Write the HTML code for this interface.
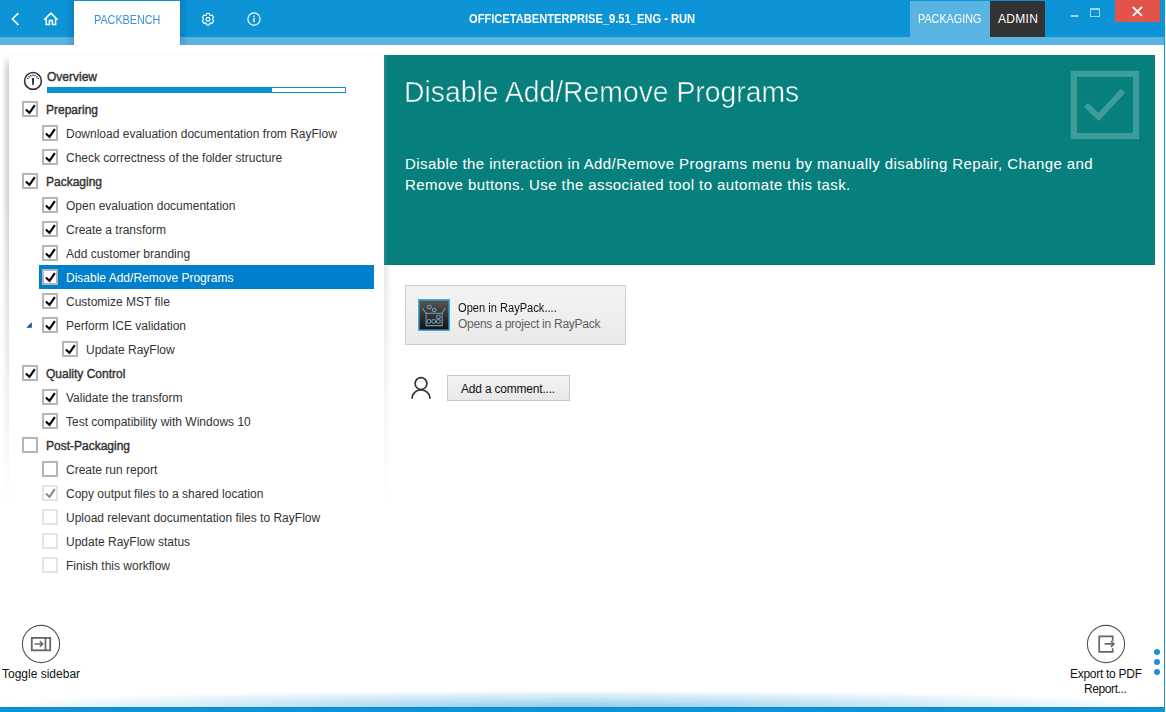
<!DOCTYPE html>
<html><head><meta charset="utf-8">
<style>
*{margin:0;padding:0;box-sizing:border-box}
html,body{width:1166px;height:712px;overflow:hidden;background:#fff;font-family:"Liberation Sans",sans-serif;position:relative}
.a{position:absolute}
svg{display:block}
#hdr{left:0;top:0;width:1164px;height:37px;background:#0c94d7}
#stripe{left:0;top:37px;width:1164px;height:8px;background:#5ab4e2}
#rborder{left:1164px;top:0;width:1px;height:712px;background:#0c94d7}
#tab{left:74px;top:1px;width:106px;height:44px;background:#fff}
#tshl{left:65px;top:0;width:9px;height:45px;background:linear-gradient(to right,rgba(0,40,80,0),rgba(0,40,80,.17))}
#tshr{left:180px;top:0;width:9px;height:45px;background:linear-gradient(to left,rgba(0,40,80,0),rgba(0,40,80,.17))}
#tabtxt{left:94px;top:12px;font-size:12px;line-height:16px;color:#3d8fd6;white-space:nowrap;transform:scaleX(0.9);transform-origin:0 0}
.ht{color:#fff;font-size:12px;line-height:16px;white-space:nowrap}
#title{left:469px;top:11px;font-weight:bold;transform:scaleX(0.927);transform-origin:0 0}
#pkg{left:910px;top:1px;width:80px;height:36px;background:#5ab4e2}
#pkgt{left:918px;top:11px;transform:scaleX(0.9);transform-origin:0 0}
#adm{left:990px;top:1px;width:55px;height:36px;background:#333}
#admt{left:998px;top:11px;letter-spacing:0.3px}
#close{left:1115px;top:0;width:45px;height:22px;background:#e2534b}
#bottom{left:0;top:707px;width:1164px;height:5px;background:#0c94d7;border-top:1px solid #0689cf}
#botgrad{left:0;top:690px;width:1164px;height:17px;background:radial-gradient(ellipse 600px 17px at 575px 17px,rgba(144,205,236,1),rgba(144,205,236,0))}
/* sidebar */
#cardsh{left:1px;top:55px;width:8px;height:450px;background:linear-gradient(to right,rgba(0,0,0,0) 10%,rgba(0,0,0,.2));-webkit-mask-image:linear-gradient(transparent 0,#000 14px,#000 30%,transparent 100%)}
#cardtop{left:9px;top:52px;width:375px;height:3px;background:linear-gradient(rgba(0,0,0,0),rgba(0,0,0,.025))}
#cardr{left:384px;top:266px;width:8px;height:240px;background:linear-gradient(to right,rgba(0,0,0,.09),rgba(0,0,0,0));-webkit-mask-image:linear-gradient(#000 0,transparent 100%)}
.sel{left:39px;width:335px;height:24px;background:#0080cc}
.cb{width:16px;height:16px;border:2px solid #b5b5b5;background:#fff}
.cb .ck{position:absolute;left:-2px;top:-2px}
.cb.light{border-color:#e4e4e4}
.t{font-size:12px;line-height:18px;color:#333;white-space:nowrap}
.t.b{font-size:12px;-webkit-text-stroke:0.4px #333}
.t.w{color:#fff}
#ovt{left:47px;top:68px}
#prog{left:47px;top:87px;width:299px;height:6px;border:1px solid #0c90d5;background:#fff}
#progf{left:47px;top:87px;width:225px;height:6px;background:#0c90d5}
/* main */
#teal{left:384px;top:55px;width:771px;height:210px;background:linear-gradient(to right,#2a8b88 0,#07807d 4px,#07807d 100%);border-bottom:1px solid #077876}
#h1{left:404px;top:72px;font-size:29px;line-height:40px;color:#fff;white-space:nowrap;transform:scaleX(0.977);transform-origin:0 0;-webkit-text-stroke:0.5px #07807d}
#desc{left:405px;top:153px;font-size:15px;line-height:21px;color:#fff;white-space:nowrap;letter-spacing:0.41px}
#rp{left:405px;top:285px;width:221px;height:60px;background:linear-gradient(#f3f3f3,#eaeaea);border:1px solid #cdcdcd}
#cm{left:447px;top:375px;width:123px;height:26px;background:linear-gradient(#f3f3f3,#e8e8e8);border:1px solid #c8c8c8}
.lbl{font-size:12px;line-height:17px;color:#111;white-space:nowrap}
#rpt1{left:458px;top:300px;transform:scaleX(0.925);transform-origin:0 0}
#rpt2{left:458px;top:316px;color:#606060;letter-spacing:-0.25px}
#cmt{left:461px;top:381px;letter-spacing:-0.2px}
#tgt{left:2px;top:666px}
#ext1{left:1070px;top:666px;letter-spacing:-0.28px}
#ext2{left:1084px;top:681px;letter-spacing:-0.4px}
.dot{width:6px;height:6px;border-radius:50%;background:#1a8fd6;left:1154px}
</style></head><body>
<div class="a" id="hdr"></div>
<div class="a" id="stripe"></div>
<div class="a" id="rborder"></div>
<div class="a" id="tshl"></div>
<div class="a" id="tshr"></div>
<div class="a" id="tab"></div>
<div class="a" id="tabtxt">PACKBENCH</div>
<!-- back arrow -->
<svg class="a" style="left:0;top:0" width="300" height="37" viewBox="0 0 300 37">
 <polyline points="18.4,13.2 12.4,19 18.4,24.8" fill="none" stroke="#fff" stroke-width="1.6"/>
 <polyline points="44.2,19.8 50.9,13.1 57.6,19.8" fill="none" stroke="#fff" stroke-width="1.6"/>
 <polyline points="46.2,18.2 46.2,24.6 49.4,24.6 49.4,20.6 52.4,20.6 52.4,24.6 55.6,24.6 55.6,18.2" fill="none" stroke="#fff" stroke-width="1.5"/>
 <g transform="translate(208,19.2)" fill="none" stroke="#fff" stroke-width="1.15" stroke-linejoin="round">
  <path d="M-1.97,-4.04 L-1.33,-5.75 L1.33,-5.75 L1.97,-4.04 L2.52,-3.73 L4.31,-4.02 L5.64,-1.72 L4.49,-0.31 L4.49,0.31 L5.64,1.72 L4.31,4.02 L2.52,3.73 L1.97,4.04 L1.33,5.75 L-1.33,5.75 L-1.97,4.04 L-2.52,3.73 L-4.31,4.02 L-5.64,1.72 L-4.49,0.31 L-4.49,-0.31 L-5.64,-1.72 L-4.31,-4.02 L-2.52,-3.73 Z"/>
  <circle cx="0" cy="0" r="1.9"/>
 </g>
 <circle cx="254" cy="19" r="6.1" fill="none" stroke="#fff" stroke-width="1.15"/>
 <rect x="253.3" y="15.6" width="1.4" height="1.4" fill="#fff"/>
 <rect x="253.3" y="18" width="1.4" height="4.2" fill="#fff"/>
</svg>
<div class="a ht" id="title">OFFICETABENTERPRISE_9.51_ENG - RUN</div>
<div class="a" id="pkg"></div>
<div class="a ht" id="pkgt">PACKAGING</div>
<div class="a" id="adm"></div>
<div class="a ht" id="admt">ADMIN</div>
<div class="a" id="close"></div>
<svg class="a" style="left:1060px;top:0" width="104" height="24" viewBox="0 0 104 24">
 <rect x="10.8" y="15" width="7.5" height="2" fill="#9fd3ef"/>
 <rect x="30.5" y="8.5" width="9" height="8" fill="none" stroke="#9fd3ef" stroke-width="1"/>
 <rect x="30" y="8" width="10" height="2" fill="#9fd3ef"/>
 <path d="M72.8,7 L82,15.8 M82,7 L72.8,15.8" stroke="#fff" stroke-width="1.8"/>
</svg>
<div class="a" id="botgrad"></div>
<div class="a" id="bottom"></div>

<!-- sidebar -->
<div class="a" id="cardsh"></div>
<div class="a" id="cardtop"></div>
<div class="a" id="cardr"></div>
<svg class="a" style="left:22px;top:70px" width="22" height="22" viewBox="0 0 22 22">
 <circle cx="11" cy="10.9" r="8.4" fill="none" stroke="#333" stroke-width="1.6"/>
 <path d="M9.9,8.0 L12.1,8.0 L11.8,14.9 L10.2,14.9 Z" fill="#333"/>
 <g stroke="#333" stroke-width="1.2"><path d="M6.56,8.83 L5.20,8.20"/><path d="M7.64,7.34 L6.61,6.24"/><path d="M9.19,6.35 L8.64,4.95"/><path d="M11.00,6.00 L11.00,4.50"/><path d="M12.81,6.35 L13.36,4.95"/><path d="M14.36,7.34 L15.39,6.24"/><path d="M15.44,8.83 L16.80,8.20"/></g>
</svg>
<div class="a t b" id="ovt">Overview</div>
<div class="a" id="prog"></div>
<div class="a" id="progf"></div>
<svg class="a" style="left:26px;top:322px" width="6" height="6" viewBox="0 0 6 6"><path d="M5.8,0.2 L5.8,5.8 L0.2,5.8 Z" fill="#1e4f9e"/></svg>
<div class="a cb" style="left:22px;top:101px"><svg class="ck" width="16" height="16" viewBox="0 0 16 16"><polyline points="3.9,8.4 7.5,11.9 12.8,4.2" fill="none" stroke="#000" stroke-width="2.1" stroke-linecap="butt" stroke-linejoin="miter"/></svg></div>
<div class="a t b" style="left:46px;top:101px">Preparing</div>
<div class="a cb" style="left:42px;top:125px"><svg class="ck" width="16" height="16" viewBox="0 0 16 16"><polyline points="3.9,8.4 7.5,11.9 12.8,4.2" fill="none" stroke="#000" stroke-width="2.1" stroke-linecap="butt" stroke-linejoin="miter"/></svg></div>
<div class="a t" style="left:66px;top:125px">Download evaluation documentation from RayFlow</div>
<div class="a cb" style="left:42px;top:149px"><svg class="ck" width="16" height="16" viewBox="0 0 16 16"><polyline points="3.9,8.4 7.5,11.9 12.8,4.2" fill="none" stroke="#000" stroke-width="2.1" stroke-linecap="butt" stroke-linejoin="miter"/></svg></div>
<div class="a t" style="left:66px;top:149px">Check correctness of the folder structure</div>
<div class="a cb" style="left:22px;top:173px"><svg class="ck" width="16" height="16" viewBox="0 0 16 16"><polyline points="3.9,8.4 7.5,11.9 12.8,4.2" fill="none" stroke="#000" stroke-width="2.1" stroke-linecap="butt" stroke-linejoin="miter"/></svg></div>
<div class="a t b" style="left:46px;top:173px">Packaging</div>
<div class="a cb" style="left:42px;top:197px"><svg class="ck" width="16" height="16" viewBox="0 0 16 16"><polyline points="3.9,8.4 7.5,11.9 12.8,4.2" fill="none" stroke="#000" stroke-width="2.1" stroke-linecap="butt" stroke-linejoin="miter"/></svg></div>
<div class="a t" style="left:66px;top:197px">Open evaluation documentation</div>
<div class="a cb" style="left:42px;top:221px"><svg class="ck" width="16" height="16" viewBox="0 0 16 16"><polyline points="3.9,8.4 7.5,11.9 12.8,4.2" fill="none" stroke="#000" stroke-width="2.1" stroke-linecap="butt" stroke-linejoin="miter"/></svg></div>
<div class="a t" style="left:66px;top:221px">Create a transform</div>
<div class="a cb" style="left:42px;top:245px"><svg class="ck" width="16" height="16" viewBox="0 0 16 16"><polyline points="3.9,8.4 7.5,11.9 12.8,4.2" fill="none" stroke="#000" stroke-width="2.1" stroke-linecap="butt" stroke-linejoin="miter"/></svg></div>
<div class="a t" style="left:66px;top:245px">Add customer branding</div>
<div class="a sel" style="top:265px"></div>
<div class="a cb" style="left:42px;top:269px"><svg class="ck" width="16" height="16" viewBox="0 0 16 16"><polyline points="3.9,8.4 7.5,11.9 12.8,4.2" fill="none" stroke="#000" stroke-width="2.1" stroke-linecap="butt" stroke-linejoin="miter"/></svg></div>
<div class="a t w" style="left:66px;top:269px">Disable Add/Remove Programs</div>
<div class="a cb" style="left:42px;top:293px"><svg class="ck" width="16" height="16" viewBox="0 0 16 16"><polyline points="3.9,8.4 7.5,11.9 12.8,4.2" fill="none" stroke="#000" stroke-width="2.1" stroke-linecap="butt" stroke-linejoin="miter"/></svg></div>
<div class="a t" style="left:66px;top:293px">Customize MST file</div>
<div class="a cb" style="left:42px;top:317px"><svg class="ck" width="16" height="16" viewBox="0 0 16 16"><polyline points="3.9,8.4 7.5,11.9 12.8,4.2" fill="none" stroke="#000" stroke-width="2.1" stroke-linecap="butt" stroke-linejoin="miter"/></svg></div>
<div class="a t" style="left:66px;top:317px">Perform ICE validation</div>
<div class="a cb" style="left:62px;top:341px"><svg class="ck" width="16" height="16" viewBox="0 0 16 16"><polyline points="3.9,8.4 7.5,11.9 12.8,4.2" fill="none" stroke="#000" stroke-width="2.1" stroke-linecap="butt" stroke-linejoin="miter"/></svg></div>
<div class="a t" style="left:86px;top:341px">Update RayFlow</div>
<div class="a cb" style="left:22px;top:365px"><svg class="ck" width="16" height="16" viewBox="0 0 16 16"><polyline points="3.9,8.4 7.5,11.9 12.8,4.2" fill="none" stroke="#000" stroke-width="2.1" stroke-linecap="butt" stroke-linejoin="miter"/></svg></div>
<div class="a t b" style="left:46px;top:365px">Quality Control</div>
<div class="a cb" style="left:42px;top:389px"><svg class="ck" width="16" height="16" viewBox="0 0 16 16"><polyline points="3.9,8.4 7.5,11.9 12.8,4.2" fill="none" stroke="#000" stroke-width="2.1" stroke-linecap="butt" stroke-linejoin="miter"/></svg></div>
<div class="a t" style="left:66px;top:389px">Validate the transform</div>
<div class="a cb" style="left:42px;top:413px"><svg class="ck" width="16" height="16" viewBox="0 0 16 16"><polyline points="3.9,8.4 7.5,11.9 12.8,4.2" fill="none" stroke="#000" stroke-width="2.1" stroke-linecap="butt" stroke-linejoin="miter"/></svg></div>
<div class="a t" style="left:66px;top:413px">Test compatibility with Windows 10</div>
<div class="a cb" style="left:22px;top:437px"></div>
<div class="a t b" style="left:46px;top:437px">Post-Packaging</div>
<div class="a cb" style="left:42px;top:461px"></div>
<div class="a t" style="left:66px;top:461px">Create run report</div>
<div class="a cb light" style="left:42px;top:485px"><svg class="ck" width="16" height="16" viewBox="0 0 16 16"><polyline points="3.9,8.4 7.5,11.9 12.8,4.2" fill="none" stroke="#8c8c8c" stroke-width="2.1" stroke-linecap="butt" stroke-linejoin="miter"/></svg></div>
<div class="a t" style="left:66px;top:485px">Copy output files to a shared location</div>
<div class="a cb light" style="left:42px;top:509px"></div>
<div class="a t" style="left:66px;top:509px">Upload relevant documentation files to RayFlow</div>
<div class="a cb light" style="left:42px;top:533px"></div>
<div class="a t" style="left:66px;top:533px">Update RayFlow status</div>
<div class="a cb light" style="left:42px;top:557px"></div>
<div class="a t" style="left:66px;top:557px">Finish this workflow</div>

<!-- main -->
<div class="a" id="teal"></div>
<svg class="a" style="left:1070px;top:70px" width="70" height="70" viewBox="0 0 70 70">
 <rect x="3.8" y="3.8" width="62.3" height="62.3" fill="none" stroke="#3e9d9a" stroke-width="6.2"/>
 <polyline points="16,35 28.7,46.8 52.8,21" fill="none" stroke="#3e9d9a" stroke-width="5.8"/>
</svg>
<div class="a" id="h1">Disable Add/Remove Programs</div>
<div class="a" id="desc">Disable the interaction in Add/Remove Programs menu by manually disabling Repair, Change and<br>Remove buttons. Use the associated tool to automate this task.</div>
<div class="a" id="rp"></div>
<svg class="a" style="left:418px;top:299px" width="32" height="32" viewBox="0 0 32 32">
 <defs><linearGradient id="ig" x1="0" y1="0" x2="0" y2="1"><stop offset="0" stop-color="#565656"/><stop offset="1" stop-color="#121212"/></linearGradient></defs>
 <rect x="0.75" y="0.75" width="30.5" height="30.5" fill="url(#ig)" stroke="#3bb0e8" stroke-width="1.5"/>
 <g fill="none" stroke="#6f9db0" stroke-width="1.1">
  <path d="M4.4,9.2 L8.1,14.3 L8.1,26.6 L24.1,26.6 L24.1,14.3 L27.2,9.2"/>
  <path d="M8.1,14.3 L24.1,14.3"/>
  <circle cx="11.4" cy="8.1" r="1.8"/><circle cx="16.2" cy="11" r="1.8"/>
  <circle cx="10.9" cy="22.4" r="1.9"/><circle cx="15.7" cy="22.4" r="1.9"/><circle cx="20.4" cy="22.4" r="1.9"/><circle cx="20.4" cy="17.9" r="1.9"/>
 </g>
</svg>
<div class="a lbl" id="rpt1">Open in RayPack....</div>
<div class="a lbl" id="rpt2">Opens a project in RayPack</div>
<svg class="a" style="left:408px;top:374px" width="26" height="28" viewBox="0 0 26 28">
 <circle cx="13" cy="9.6" r="5.9" fill="none" stroke="#333" stroke-width="1.7"/>
 <path d="M4,24.8 A9,9 0 0 1 22,24.8" fill="none" stroke="#333" stroke-width="1.7"/>
</svg>
<div class="a" id="cm"></div>
<div class="a lbl" id="cmt">Add a comment....</div>

<!-- bottom buttons -->
<svg class="a" style="left:20px;top:623px" width="42" height="42" viewBox="0 0 42 42">
 <circle cx="21" cy="21" r="18.6" fill="none" stroke="#555" stroke-width="1.1"/>
 <rect x="11.8" y="14.9" width="18.4" height="12.4" fill="none" stroke="#666" stroke-width="1.8"/>
 <path d="M25.5,14.9 L25.5,27.3" stroke="#666" stroke-width="1.7"/>
 <path d="M14.5,20.9 L22.5,20.9 M19.8,18 L22.8,20.9 L19.8,23.8" fill="none" stroke="#666" stroke-width="1.5"/>
</svg>
<div class="a lbl" id="tgt">Toggle sidebar</div>
<svg class="a" style="left:1085px;top:623px" width="42" height="42" viewBox="0 0 42 42">
 <circle cx="21" cy="21" r="18.6" fill="none" stroke="#555" stroke-width="1.1"/>
 <path d="M27.7,18 L27.7,13.3 L14.2,13.3 L14.2,28.9 L27.7,28.9 L27.7,25.2" fill="none" stroke="#666" stroke-width="1.7"/>
 <path d="M19.6,20.9 L28.6,20.9 M25.9,18 L28.9,20.9 L25.9,23.8" fill="none" stroke="#666" stroke-width="1.6"/>
</svg>
<div class="a lbl" id="ext1">Export to PDF</div>
<div class="a lbl" id="ext2">Report...</div>
<div class="a dot" style="top:649px"></div>
<div class="a dot" style="top:659px"></div>
<div class="a dot" style="top:669px"></div>
</body></html>
